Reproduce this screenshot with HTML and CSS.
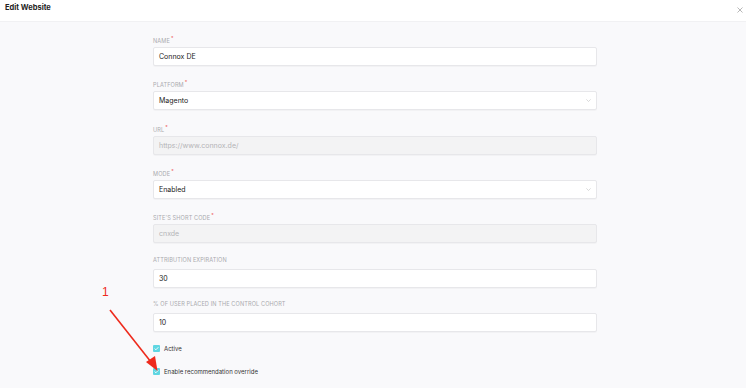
FILE: index.html
```html
<!DOCTYPE html>
<html lang="en">
<head>
  <meta charset="UTF-8">
  <title>Edit Website</title>
  <link rel="stylesheet" href="styles.css">
</head>
<body>
  <div class="header">
    <span class="title">Edit Website</span>
    <svg class="close" width="6" height="6" viewBox="0 0 6 6"><path d="M0.5 0.5 L5.5 5.5 M5.5 0.5 L0.5 5.5" stroke="#9a9a9a" stroke-width="0.7"/></svg>
  </div>

  <div class="content">
    <form class="form">
      <div class="field">
        <label>Name<sup>*</sup></label>
        <div class="input">Connox DE</div>
      </div>
      <div class="field">
        <label>Platform<sup>*</sup></label>
        <div class="input select">Magento
          <svg class="chev" width="5" height="3" viewBox="0 0 5 3"><path d="M0.4 0.4 L2.5 2.5 L4.6 0.4" fill="none" stroke="#cacaca" stroke-width="0.7"/></svg>
        </div>
      </div>
      <div class="field">
        <label>URL<sup>*</sup></label>
        <div class="input disabled">https://www.connox.de/</div>
      </div>
      <div class="field">
        <label>Mode<sup>*</sup></label>
        <div class="input select">Enabled
          <svg class="chev" width="5" height="3" viewBox="0 0 5 3"><path d="M0.4 0.4 L2.5 2.5 L4.6 0.4" fill="none" stroke="#cacaca" stroke-width="0.7"/></svg>
        </div>
      </div>
      <div class="field">
        <label>Site's short code<sup>*</sup></label>
        <div class="input disabled">cnxde</div>
      </div>
      <div class="field">
        <label>Attribution expiration</label>
        <div class="input">30</div>
      </div>
      <div class="field">
        <label>% of user placed in the control cohort</label>
        <div class="input">10</div>
      </div>

      <div class="check">
        <span class="box"><svg width="7" height="7" viewBox="0 0 7 7"><path d="M1.6 3.6 L2.9 4.8 L5.4 2.2" fill="none" stroke="#fff" stroke-width="0.9"/></svg></span>
        <span>Active</span>
      </div>
      <div class="check">
        <span class="box"><svg width="7" height="7" viewBox="0 0 7 7"><path d="M1.6 3.6 L2.9 4.8 L5.4 2.2" fill="none" stroke="#fff" stroke-width="0.9"/></svg></span>
        <span>Enable recommendation override</span>
      </div>
    </form>
  </div>

  <!-- annotation -->
  <span class="mark">1</span>
  <svg class="arrow" width="746" height="388" viewBox="0 0 746 388">
    <line x1="110" y1="310" x2="151" y2="362" stroke="#ee2a1c" stroke-width="1.6"/>
    <path d="M157.5 371 L146 362 L155 356 Z" fill="#ee2a1c"/>
  </svg>
</body>
</html>
```

FILE: styles.css
```css
body {
  margin: 0;
  font-family: Inter, "Liberation Sans", sans-serif;
  background-color: #f9f9fb;
  width: 746px;
  height: 388px;
  overflow: hidden;
  position: relative;
}
.header {
  height: 22px;
  background: #fff;
  border-bottom: 1px solid #f1f1f3;
  box-sizing: border-box;
  display: flex;
  justify-content: space-between;
  align-items: flex-start;
  padding: 3px 3px 0 5px;
}
.title {
  font-size: 7.5px;
  font-weight: 700;
  color: #222;
}
.close {
  margin-top: 4px;
}
.content {
  padding-top: 12px;
}
.form {
  width: 444px;
  margin-left: 153px;
}
.field {
  margin-bottom: 12.35px;
}
.field label {
  display: block;
  height: 8px;
  line-height: 8px;
  font-size: 5.6px;
  text-transform: uppercase;
  color: #a9a9ae;
  letter-spacing: 0.1px;
  margin-bottom: 5px;
}
.field sup {
  color: #ee5a5a;
  font-size: 5px;
  vertical-align: 3px;
  margin-left: 1px;
}
.input {
  height: 19px;
  box-sizing: border-box;
  background: #fff;
  border: 1px solid #e7e7ea;
  border-radius: 2px;
  box-shadow: 0 1px 1px rgba(0,0,0,0.03);
  padding: 0 5px;
  display: flex;
  align-items: center;
  justify-content: space-between;
  font-size: 7px;
  color: #222;
}
.input.select {
  padding-right: 5px;
}
.input.disabled {
  background: #f3f3f4;
  color: #b3b3b7;
}
.check {
  display: flex;
  align-items: center;
  gap: 4px;
  font-size: 6px;
  color: #333;
  height: 8px;
  margin-top: 11px;
}
.check + .check {
  margin-top: 15px;
}
.box {
  width: 7px;
  height: 7px;
  background: #5fd6e2;
  border-radius: 1px;
  display: flex;
}
.mark {
  position: absolute;
  left: 102px;
  top: 285px;
  font-size: 12px;
  color: #ee2a1c;
  font-family: "Liberation Sans", Arial, sans-serif;
}
.arrow {
  position: absolute;
  left: 0;
  top: 0;
}
```
